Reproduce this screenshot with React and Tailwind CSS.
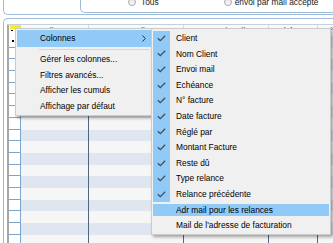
import React from 'react';

const items = [
  ['Client', true],
  ['Nom Client', true],
  ['Envoi mail', true],
  ['Echéance', true],
  ['N° facture', true],
  ['Date facture', true],
  ['Réglé par', true],
  ['Montant Facture', true],
  ['Reste dû', true],
  ['Type relance', true],
  ['Relance précédente', true],
  ['Adr mail pour les relances', false],
  ["Mail de l'adresse de facturation", false],
];

function Check() {
  return (
    <svg width="9" height="7" viewBox="0 0 9 7" className="block">
      <path d="M0.8 3.2 L3.3 5.6 L8.2 0.8" fill="none" stroke="#3d4a57" strokeWidth="1.2" />
    </svg>
  );
}

function Radio() {
  return (
    <span className="block w-[8px] h-[8px] rounded-full border border-[#a9a9a9] bg-gradient-to-b from-[#e6e6e6] to-[#f8f8f8]" />
  );
}

export default function App() {
  const rows = Array.from({ length: 18 });
  return (
    <div className="w-[333px] h-[243px] overflow-hidden bg-white relative font-['Liberation_Sans',Arial,sans-serif] text-[8.4px] text-black leading-none">
      {/* top group box */}
      <div className="ml-[3px] h-[16px] border-l border-b border-[#9fbad6] rounded-bl-[5px]">
        <div className="ml-[76px] h-[14px] border-l border-b border-[#9fbad6] rounded-bl-[5px]">
          <div className="flex items-center h-[6px] -mt-[1px] text-[#1a1a1a]">
            <div className="ml-[47px]"><Radio /></div>
            <span className="ml-[5px]">Tous</span>
            <div className="ml-[65px]"><Radio /></div>
            <span className="ml-[3px]">envoi par mail accepte</span>
          </div>
        </div>
      </div>

      {/* second group box */}
      <div className="mt-[3px] ml-[3px] h-[230px] border-l border-t border-[#9fbad6] rounded-tl-[5px] pl-[3px] pt-[5px]">
        <div className="border-t border-[#c3d0dd]">
          {/* header */}
          <div className="flex h-[11px] bg-[#fbfbfb] text-[#333]">
            <div className="w-[2px] bg-[#a7a7a7]" />
            <div className="w-[12px] relative bg-white border-r border-[#7aa5cf]">
              <div className="absolute left-[1px] top-0 w-[11px] h-[4px] bg-[#f5ec2a]" />
              <div className="absolute left-[2px] top-[5px] w-[2px] h-[1px] bg-black" />
            </div>
            <div className="w-[68px] border-r border-[#d6dde5] flex justify-center pt-[2px]">Client</div>
            <div className="w-[95px] border-r border-[#d6dde5] flex justify-center pt-[2px]">Nom Client</div>
            <div className="w-[85px] border-r border-[#d6dde5] flex justify-center pt-[2px]">Envoi mail</div>
            <div className="w-[49px] border-r border-[#d6dde5] flex justify-center pt-[2px]">Echéance</div>
            <div className="flex-1 flex pl-[6px] pt-[2px]">N°</div>
          </div>
          {rows.map((_, i) => (
            <div key={i} className={`flex h-[11.7px] ${i % 2 === 0 ? 'bg-[#dfe6ef]' : 'bg-[#f6f6f6]'}`}>
              <div className="w-[2px] bg-[#a7a7a7]" />
              <div className="w-[12px] relative bg-white border-r border-b border-[#7aa5cf]">
                {i === 0 && <div className="absolute left-[3px] top-[4px] w-[2px] h-[2px] bg-black" />}
              </div>
              <div className="w-[68px] border-r border-[#4f6781]" />
              <div className="w-[95px] border-r border-[#4f6781]" />
              <div className="w-[85px] border-r border-[#4f6781]" />
              <div className="w-[49px] border-r border-[#4f6781]" />
              <div className="flex-1" />
            </div>
          ))}
        </div>
      </div>

      {/* main context menu */}
      <div className="absolute left-[15px] top-[28px] w-[138px] bg-[#f0f0f0] border border-[#cccccc] px-[1px] pt-[1px] pb-[1px] shadow-[2px_2px_3px_rgba(0,0,0,0.35)]">
        <div className="h-[16.5px] bg-[#91c9f7] flex items-center pl-[23px] pr-[5px]">
          <span className="flex-1">Colonnes</span>
          <svg width="4" height="7" viewBox="0 0 4 7" className="block">
            <path d="M0.5 0.5 L3.3 3.5 L0.5 6.5" fill="none" stroke="#333" strokeWidth="1" />
          </svg>
        </div>
        <div className="h-[5px] flex items-center pl-[22px] pr-[2px]">
          <div className="h-[1px] flex-1 bg-[#d7d7d7]" />
        </div>
        {['Gérer les colonnes...', 'Filtres avancés...', 'Afficher les cumuls', 'Affichage par défaut'].map((t) => (
          <div key={t} className="h-[15.6px] flex items-center pl-[23px]">{t}</div>
        ))}
      </div>

      {/* submenu */}
      <div className="absolute left-[151px] top-[28px] w-[180px] bg-[#f0f0f0] border border-[#cccccc] px-[1px] pt-[1.5px] pb-[1px] shadow-[2px_2px_3px_rgba(0,0,0,0.35)]">
        {items.map(([t, checked], i) => {
          const hl = i === 11;
          return (
            <div key={t} className="h-[15.6px] flex">
              <div className={`flex w-full items-stretch ${hl ? 'bg-[#91c9f7] my-[1.5px]' : ''}`}>
                <div className={`w-[16.5px] flex items-center justify-center ${checked ? 'bg-[#91c9f7]' : ''}`}>
                  {checked && <Check />}
                </div>
                <div className="flex items-center pl-[6.5px]">{t}</div>
              </div>
            </div>
          );
        })}
      </div>
    </div>
  );
}
